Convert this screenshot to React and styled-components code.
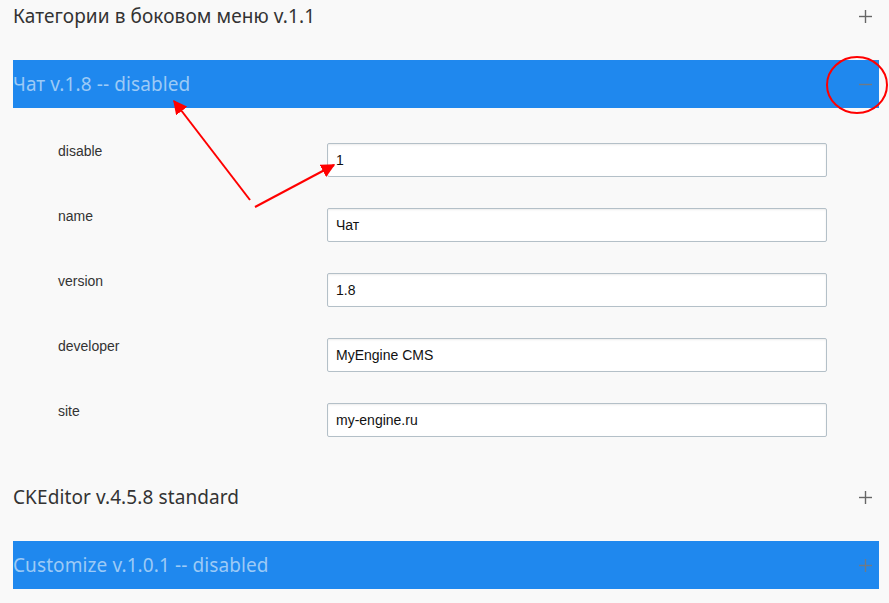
import styled, { createGlobalStyle } from 'styled-components'

const GlobalStyle = createGlobalStyle`
    html, body {
        margin: 0;
        padding: 0;
        background: #f9f9f9;
        overflow: hidden;
    }
`;

const modules = [
    { title: 'Категории в боковом меню v.1.1', disabled: false },
    {
        title: 'Чат v.1.8 -- disabled',
        disabled: true,
        open: true,
        fields: [
            { name: 'disable', value: '1' },
            { name: 'name', value: 'Чат' },
            { name: 'version', value: '1.8' },
            { name: 'developer', value: 'MyEngine CMS' },
            { name: 'site', value: 'my-engine.ru' },
        ],
    },
    { title: 'CKEditor v.4.5.8 standard', disabled: false },
    { title: 'Customize v.1.0.1 -- disabled', disabled: true },
];

const ToggleIcon = ({ open }) => (
    <svg width="15" height="15" viewBox="0 0 15 15">
        <path d="M1 7.5h13" stroke="currentColor" strokeWidth="1.4" />
        {!open && <path d="M7.5 1v13" stroke="currentColor" strokeWidth="1.4" />}
    </svg>
);

// red hand-drawn marks from the screenshot
const Annotations = () => (
    <Overlay width="889" height="603" viewBox="0 0 889 603">
        <defs>
            <marker id="head" viewBox="0 0 10 10" refX="9" refY="5"
                markerWidth="7" markerHeight="7" orient="auto-start-reverse">
                <path d="M0 0 L10 5 L0 10 z" fill="#ff0000" />
            </marker>
        </defs>
        <line x1="250" y1="200" x2="174" y2="101" stroke="#ff0000" strokeWidth="2" markerEnd="url(#head)" />
        <line x1="255" y1="207" x2="334" y2="165" stroke="#ff0000" strokeWidth="2" markerEnd="url(#head)" />
        <ellipse cx="857" cy="85" rx="30" ry="28" fill="none" stroke="#ff0000" strokeWidth="2" />
    </Overlay>
);

const App = () => {
    return (
        <Page>
            <GlobalStyle />
            <List>
                {modules.map((m) => (
                    <Item key={m.title}>
                        <Header $disabled={m.disabled}>
                            <Title $disabled={m.disabled}>{m.title}</Title>
                            <Toggle $disabled={m.disabled}>
                                <ToggleIcon open={m.open} />
                            </Toggle>
                        </Header>
                        {m.open && (
                            <Fields>
                                {m.fields.map((f) => (
                                    <Row key={f.name}>
                                        <Label>{f.name}</Label>
                                        <Input defaultValue={f.value} />
                                    </Row>
                                ))}
                            </Fields>
                        )}
                    </Item>
                ))}
            </List>
            <Annotations />
        </Page>
    );
};

const Page = styled.main`
    position: relative;
    width: 889px;
    height: 603px;
    overflow: hidden;
    font-family: 'Noto Sans', 'Open Sans', sans-serif;
`;

const List = styled.div`
    display: flex;
    flex-direction: column;
    gap: 20px;
    margin: -8px 10px 0 13px;
`;

const Item = styled.section`
    display: flex;
    flex-direction: column;
`;

const Header = styled.div`
    display: flex;
    align-items: center;
    justify-content: space-between;
    height: 48px;
    background: ${(p) => (p.$disabled ? '#1f88ee' : 'transparent')};
`;

const Title = styled.h3`
    margin: 0;
    font-weight: 400;
    font-size: 19px;
    letter-spacing: 0.1px;
    color: ${(p) => (p.$disabled ? '#9ccaf6' : '#333')};
`;

const Toggle = styled.span`
    display: flex;
    margin-right: 6px;
    color: ${(p) => (p.$disabled ? '#6f7a86' : '#666')};
`;

const Fields = styled.div`
    display: flex;
    flex-direction: column;
    gap: 31px;
    padding: 35px 0 16px 45px;
`;

const Row = styled.div`
    display: grid;
    grid-template-columns: 269px 500px;
    align-items: start;
`;

const Label = styled.label`
    font-family: 'Liberation Sans', Arial, sans-serif;
    font-size: 14px;
    color: #333;
`;

const Input = styled.input`
    box-sizing: border-box;
    height: 34px;
    padding: 0 8px;
    border: 1px solid #b4c0c8;
    border-radius: 2px;
    box-shadow: inset 0 1px 2px rgba(0, 0, 0, 0.08);
    background: #fff;
    font-family: 'Liberation Sans', Arial, sans-serif;
    font-size: 14px;
    color: #111;
    outline: none;
`;

const Overlay = styled.svg`
    position: absolute;
    top: 0;
    left: 0;
    pointer-events: none;
`;

export default App;
